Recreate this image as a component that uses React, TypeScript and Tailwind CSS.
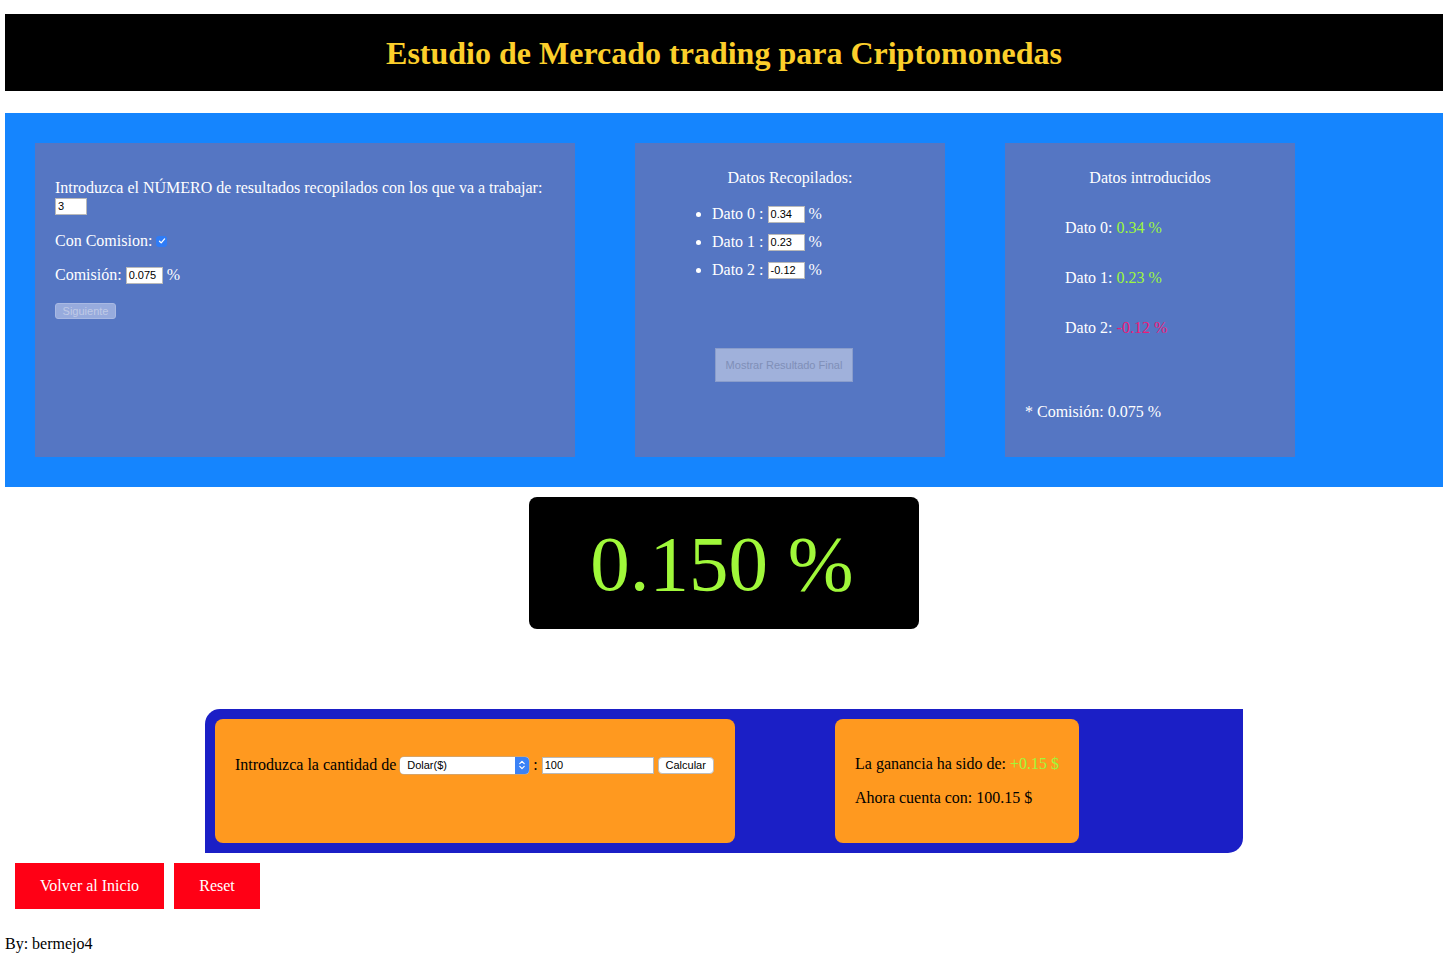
import React from "react";

const serif = { fontFamily: '"Liberation Serif", "Times New Roman", serif' };

function TextInput({ value, w }: { value: string; w: string }) {
  return (
    <span
      className={`inline-flex items-center h-[17px] ${w} bg-white border border-[#b9b9b9] px-[2px] text-[11px] text-black leading-none align-middle`}
      style={{ fontFamily: '"Liberation Sans", Arial, sans-serif' }}
    >
      {value}
    </span>
  );
}

function Checkbox() {
  return (
    <span className="inline-flex items-center justify-center w-[11px] h-[11px] rounded-[3px] bg-[#2f7cf6] align-middle ml-[4px]">
      <svg width="8" height="8" viewBox="0 0 8 8">
        <path d="M1.5 4.2 L3.2 5.9 L6.6 1.9" stroke="white" strokeWidth="1.3" fill="none" strokeLinecap="round" strokeLinejoin="round" />
      </svg>
    </span>
  );
}

function SelectBox() {
  return (
    <span
      className="inline-flex items-center h-[17px] w-[129px] bg-white rounded-[4px] text-[11px] text-black leading-none align-middle overflow-hidden shadow-[0_0_0_0.5px_#b0b0b0]"
      style={{ fontFamily: '"Liberation Sans", Arial, sans-serif' }}
    >
      <span className="flex-1 pl-[7px]">Dolar($)</span>
      <span className="w-[14px] h-full bg-[#3b82f6] flex items-center justify-center">
        <svg width="8" height="12" viewBox="0 0 8 12">
          <path d="M1.8 4.6 L4 2.4 L6.2 4.6" stroke="white" strokeWidth="1.2" fill="none" strokeLinecap="round" strokeLinejoin="round" />
          <path d="M1.8 7.4 L4 9.6 L6.2 7.4" stroke="white" strokeWidth="1.2" fill="none" strokeLinecap="round" strokeLinejoin="round" />
        </svg>
      </span>
    </span>
  );
}

export default function App() {
  return (
    <div className="bg-white text-[16px] text-black" style={serif}>
      {/* Header */}
      <div className="pt-[14px] pl-[5px] pr-[3px]">
        <div className="h-[77px] bg-black flex items-center justify-center">
          <h1 className="text-[32px] font-bold text-[#fccf2b] leading-none">
            Estudio de Mercado trading para Criptomonedas
          </h1>
        </div>
      </div>

      {/* Blue section */}
      <div className="mt-[22px] ml-[5px] mr-[3px] h-[374px] bg-[#1585fe] p-[30px] flex gap-[60px] text-white">
        {/* Card 1 */}
        <div className="w-[540px] h-[314px] bg-[#5576c3] px-[20px] pt-[36px]">
          <div className="leading-[18px]">
            Introduzca el NÚMERO de resultados recopilados con los que va a trabajar:
          </div>
          <div className="mt-[1px] h-[17px] flex">
            <TextInput value="3" w="w-[32px]" />
          </div>
          <div className="mt-[17px] h-[18px] flex items-center">
            Con Comision:
            <Checkbox />
          </div>
          <div className="mt-[16px] h-[18px] flex items-center">
            Comisión:&nbsp;
            <TextInput value="0.075" w="w-[37px]" />
            &nbsp;%
          </div>
          <div className="mt-[14px]">
            <span
              className="inline-flex items-center justify-center h-[16px] w-[61px] rounded-[3px] bg-[#97abdd] border border-[#a9b9e3] text-[11px] text-[#c0cae6]"
              style={{ fontFamily: '"Liberation Sans", Arial, sans-serif' }}
            >
              Siguiente
            </span>
          </div>
        </div>

        {/* Card 2 */}
        <div className="w-[310px] h-[314px] bg-[#5576c3] pt-[26px]">
          <div className="text-center leading-[18px]">Datos Recopilados:</div>
          <ul className="mt-[13px] list-disc pl-[77px]">
            {["0.34", "0.23", "-0.12"].map((v, i) => (
              <li key={i} className="h-[28px] leading-[28px]">
                <span className="inline-flex items-center h-[28px]">
                  Dato {i} :&nbsp;
                  <TextInput value={v} w="w-[37px]" />
                  &nbsp;%
                </span>
              </li>
            ))}
          </ul>
          <div className="mt-[64px] ml-[80px]">
            <span
              className="inline-flex items-center justify-center h-[34px] w-[138px] bg-[#a0b1db] border border-[#8a9dcb] text-[11px] text-[#7f8fb8]"
              style={{ fontFamily: '"Liberation Sans", Arial, sans-serif' }}
            >
              Mostrar Resultado Final
            </span>
          </div>
        </div>

        {/* Card 3 */}
        <div className="w-[290px] h-[314px] bg-[#5576c3] pt-[26px]">
          <div className="text-center leading-[18px]">Datos introducidos</div>
          <div className="pl-[60px] mt-[32px] leading-[18px]">
            Dato 0: <span className="text-[#9ef93b]">0.34 %</span>
          </div>
          <div className="pl-[60px] mt-[32px] leading-[18px]">
            Dato 1: <span className="text-[#9ef93b]">0.23 %</span>
          </div>
          <div className="pl-[60px] mt-[32px] leading-[18px]">
            Dato 2: <span className="text-[#ec1a78]">-0.12 %</span>
          </div>
          <div className="pl-[20px] mt-[66px] leading-[18px]">* Comisión: 0.075 %</div>
        </div>
      </div>

      {/* Result */}
      <div className="mt-[10px] flex justify-center">
        <div className="w-[390px] h-[132px] bg-black rounded-[8px] flex items-center justify-center ml-[2px]">
          <span className="text-[79px] leading-none text-[#a0f83a] mr-[4px]">0.150 %</span>
        </div>
      </div>

      {/* Bottom panel */}
      <div className="mt-[80px] flex justify-center">
        <div className="w-[1038px] h-[144px] bg-[#1b1fc6] rounded-tl-[15px] rounded-br-[15px] p-[10px] flex gap-[100px] ml-[2px]">
          <div className="w-[520px] h-[124px] bg-[#ff991f] rounded-[8px] px-[20px] pt-[37px]">
            <div className="h-[18px] flex items-center whitespace-nowrap">
              Introduzca la cantidad de&nbsp;
              <SelectBox />
              &nbsp;:&nbsp;
              <TextInput value="100" w="w-[112px]" />
              <span
                className="ml-[4px] inline-flex items-center justify-center h-[17px] w-[56px] bg-white rounded-[4px] border border-[#bdbdbd] text-[11px] text-black"
                style={{ fontFamily: '"Liberation Sans", Arial, sans-serif' }}
              >
                Calcular
              </span>
            </div>
          </div>
          <div className="w-[244px] h-[124px] bg-[#ff991f] rounded-[8px] px-[20px] pt-[36px]">
            <div className="leading-[18px] whitespace-nowrap">
              La ganancia ha sido de: <span className="text-[#9ef93b]">+0.15 $</span>
            </div>
            <div className="mt-[16px] leading-[18px] whitespace-nowrap">Ahora cuenta con: 100.15 $</div>
          </div>
        </div>
      </div>

      {/* Buttons */}
      <div className="mt-[10px] pl-[15px] flex gap-[10px]">
        <div className="h-[46px] w-[149px] bg-[#ff0015] text-white flex items-center justify-center">
          Volver al Inicio
        </div>
        <div className="h-[46px] w-[86px] bg-[#ff0015] text-white flex items-center justify-center">
          Reset
        </div>
      </div>

      <div className="mt-[26px] pl-[5px] leading-[18px]">By: bermejo4</div>
    </div>
  );
}
